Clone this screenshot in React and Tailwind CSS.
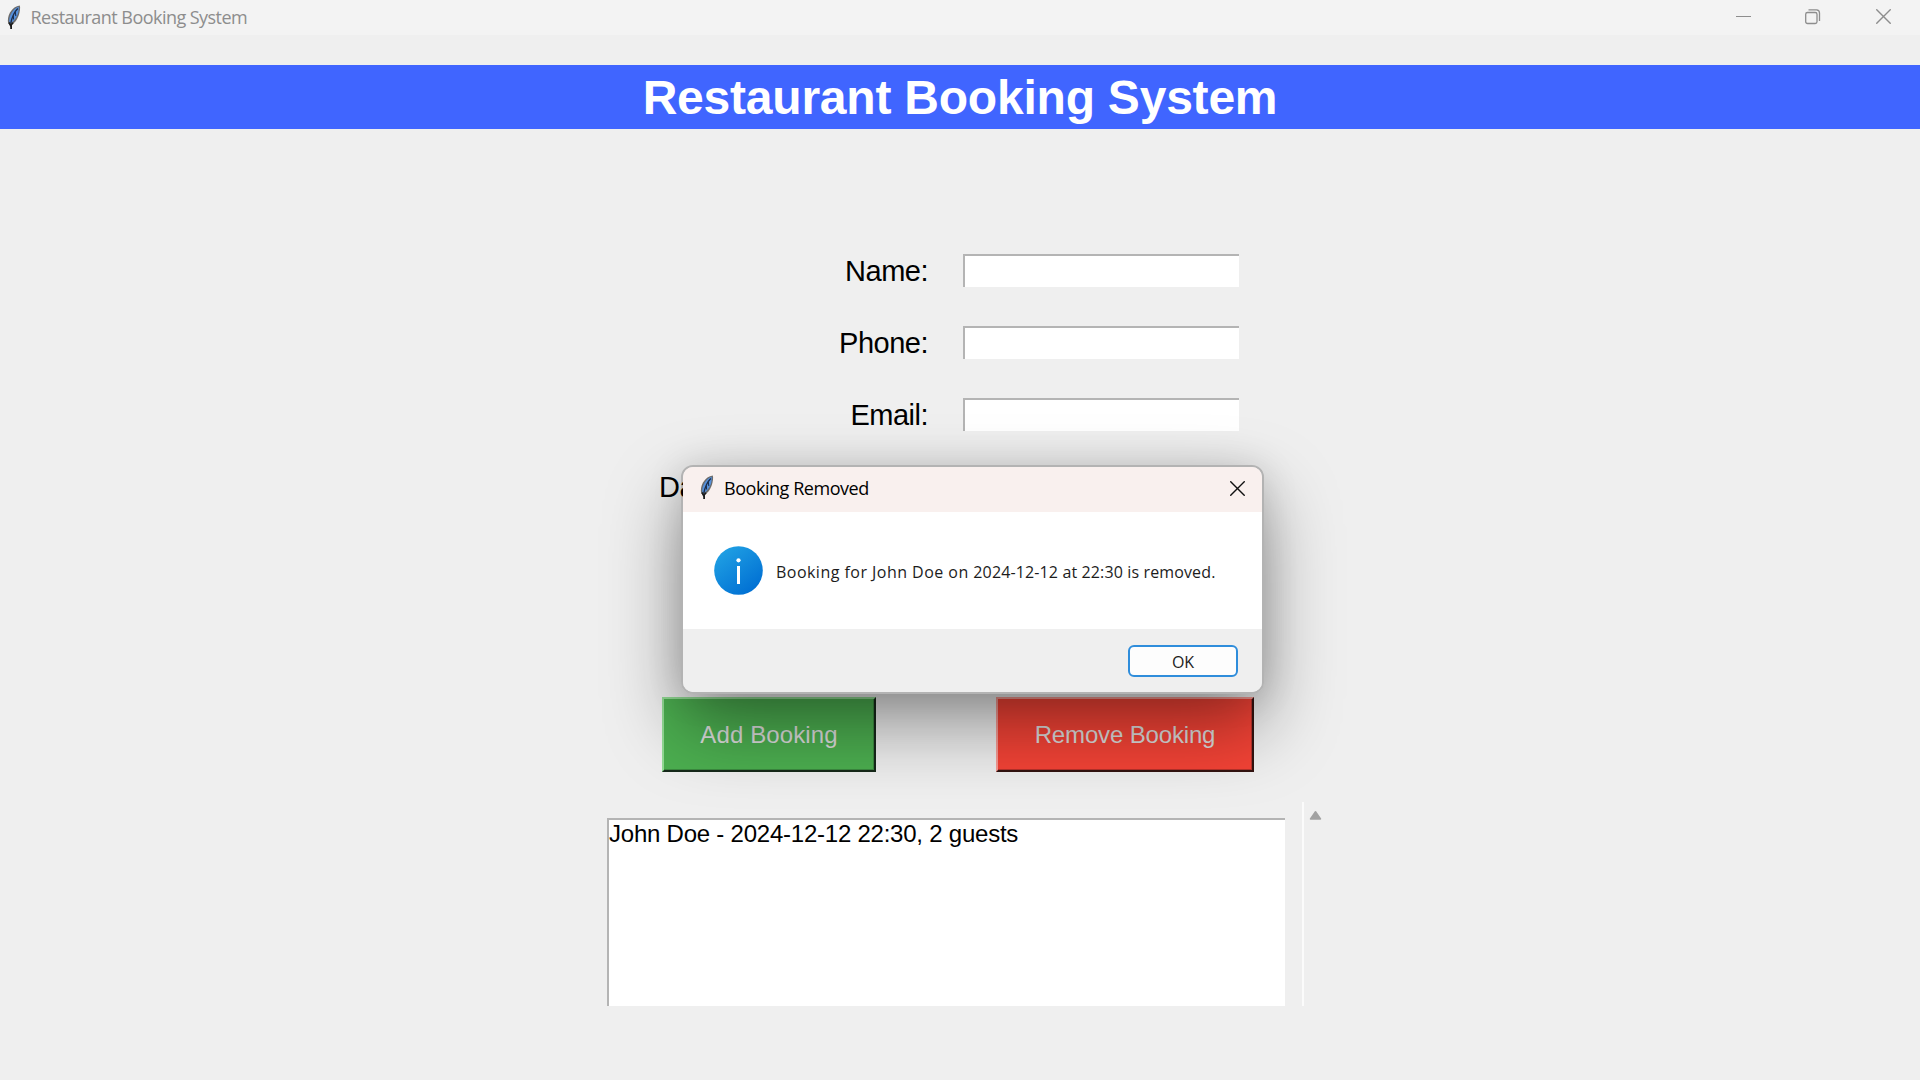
function Feather() {
  return (
    <svg className="shrink-0" width="14" height="25" viewBox="0 0 14 25" fill="none">
      <path d="M12.800.5C9 .8 5.500 3.500 3 7.500 1 11.300.4 15 1.200 18.200L3.400 20.500C7.300 18.700 10.500 14.500 12 9.500 12.900 6 13.500 3 12.800.5Z" fill="#6b6b6b" />
      <path d="M11.600 1.800C8 3 5 6.300 3.300 10.500 2.100 13.500 1.900 16.300 2.800 18.300 6.800 16.800 9.500 13 10.800 9 11.600 6.300 12 3.700 11.600 1.800Z" fill="#5590dc" />
      <path d="M10.800 3.500C7.200 7 5 12 3.700 18.500" stroke="#1b2c49" strokeWidth="1.300" />
      <path d="M8.300 7 8.800 11M6.300 10.500 6.600 14.500" stroke="#1b2c49" strokeWidth="1" />
      <path d="M2 17.500 3.600 20.500 6 17.800" stroke="#1c1c1c" strokeWidth="1.600" />
      <path d="M4.100 19V24" stroke="#1c1c1c" strokeWidth="1.800" />
    </svg>
  );
}

function Cross({ color }) {
  return (
    <svg className="shrink-0" width="15" height="15" viewBox="0 0 15 15" fill="none" stroke={color} strokeWidth="1.400">
      <path d="M.3.3l14.400 14.400M14.700.3L.3 14.700" />
    </svg>
  );
}

function InfoIcon() {
  return (
    <svg className="shrink-0" width="49" height="49" viewBox="0 0 49 49">
      <defs>
        <linearGradient id="info" x1="0.15" y1="0.1" x2="0.8" y2="0.95">
          <stop offset="0" stopColor="#1f9fe3" />
          <stop offset="1" stopColor="#006fd3" />
        </linearGradient>
      </defs>
      <circle cx="24.500" cy="24.500" r="24.300" fill="url(#info)" />
      <circle cx="24.500" cy="14.300" r="2.100" fill="#fff" />
      <rect x="23" y="20" width="3" height="18" fill="#fff" />
    </svg>
  );
}

const fields = ["Name:", "Phone:", "Email:"];
const bookings = ["John Doe - 2024-12-12 22:30, 2 guests"];

function Label({ children }) {
  return <label className="w-[928px] shrink-0 text-right text-[29px] leading-[34px] tracking-[-0.5px]">{children}</label>;
}

export default function App() {
  return (
    <div className="relative h-[1080px] w-[1920px] overflow-hidden bg-[#efefef] font-['Liberation_Sans',sans-serif] text-black">
      <header className="flex h-[35px] bg-[#f3f3f3] pl-[7px] font-['Open_Sans',sans-serif]">
        <div className="pt-[5px]">
          <Feather />
        </div>
        <span className="ml-[9.500px] text-[18px] leading-[34px] tracking-[-0.54px] text-[#8d8d8d]">Restaurant Booking System</span>
        <div className="ml-auto flex items-start pr-[29px] pt-[9px]">
          <div className="mt-[7px] h-px w-[15px] bg-[#8d8d8d]" />
          <svg className="ml-[54px]" width="16" height="16" viewBox="0 0 16 16" fill="none" stroke="#8d8d8d" strokeWidth="1.300">
            <rect x=".7" y="3.500" width="11.300" height="11" rx="1.800" />
            <path d="M3.500.8H11.500Q14.500.8 14.500 4V12" />
          </svg>
          <div className="ml-[55px]">
            <Cross color="#8d8d8d" />
          </div>
        </div>
      </header>

      <h1 className="mt-[30px] h-16 bg-[#4065ff] text-center text-[48px] font-bold leading-[66px] tracking-[-0.22px] text-white">
        Restaurant Booking System
      </h1>

      <main className="mt-[125px]">
        <div className="flex flex-col gap-[39px]">
          {fields.map((name) => (
            <div key={name} className="flex h-[33px] items-center">
              <Label>{name}</Label>
              <input className="ml-[35px] h-[33px] w-[276px] border-l-2 border-t-2 border-[#b4b4b4] bg-white outline-none" />
            </div>
          ))}
          <div className="flex h-[33px] items-center pl-[659px]">
            <span className="whitespace-nowrap text-[29px] leading-[34px] tracking-[-0.5px]">Date:</span>
          </div>
        </div>

        <div className="mt-[194px] flex gap-[120px] pl-[662px] text-[24px] leading-none text-[#ddd]">
          <button className="flex h-[75px] w-[214px] justify-center border-2 border-b-[#16291a] border-l-[#93dc95] border-r-[#16291a] border-t-[#93dc95] bg-[#4caf50] pt-px leading-[70px] tracking-[0.12px] shadow-[inset_-1px_-1px_0_#3b8a3f]">
            Add Booking
          </button>
          <button className="flex h-[75px] w-[258px] justify-center border-2 border-b-[#331310] border-l-[#f79a93] border-r-[#331310] border-t-[#f79a93] bg-[#f44336] pt-px leading-[70px] tracking-[-0.15px] shadow-[inset_-1px_-1px_0_#b8322a]">
            Remove Booking
          </button>
        </div>

        <div className="mt-[30px] flex h-[204px] pl-[607px]">
          <ul className="mt-4 h-[188px] w-[678px] border-l-2 border-t-2 border-[#b4b4b4] bg-white text-[24px] leading-[28px] tracking-[-0.23px]">
            {bookings.map((b) => (
              <li key={b}>{b}</li>
            ))}
          </ul>
          <div className="ml-[17px] flex w-[30px] border-l-2 border-[#fbfbfb] pl-[5px] pt-[8px]">
            <svg width="13" height="11" viewBox="0 0 13 11">
              <path d="M6.500 1.800 11.500 9H1.500Z" fill="#a2a2a2" stroke="#a2a2a2" strokeWidth="1.500" strokeLinejoin="round" />
            </svg>
          </div>
        </div>
      </main>

      {/* Confirmation dialog floating above the form */}
      <section
        role="dialog"
        className="absolute left-[681px] top-[465px] h-[229px] w-[583px] rounded-[12px] border-2 border-black/25 bg-clip-padding font-['Open_Sans',sans-serif] shadow-[0_32px_76px_rgba(0,0,0,0.4),0_2px_36px_rgba(0,0,0,0.12)]"
      >
        <div className="flex h-full flex-col overflow-hidden rounded-[10px]">
          <div className="flex h-[45px] shrink-0 bg-[#f9f0ee] pl-[17px] pr-[17px]">
            <div className="pt-[8px]">
              <Feather />
            </div>
            <span className="ml-[10px] text-[18px] leading-[43px] tracking-[-0.45px]">Booking Removed</span>
            <div className="ml-auto pt-[14px]">
              <Cross color="#111" />
            </div>
          </div>
          <div className="flex h-[117px] shrink-0 items-center bg-white pl-[31px]">
            <InfoIcon />
            <p className="ml-[13px] mt-[3px] whitespace-nowrap text-[16px] font-medium leading-[24px] tracking-[0.13px] text-[#1c1c1c]">
              <span className="tracking-[0.47px]">Booking for John Doe on </span>
              2024-12-12 at 22:30 is removed.
            </p>
          </div>
          <div className="flex grow justify-end bg-[#efefef] pr-[24px] pt-[16px]">
            <button className="h-[32px] w-[110px] rounded-[6px] border-2 border-[#2f8ddb] bg-[#fdfdfd] pt-px text-[16px] font-medium leading-[29px] text-[#1c1c1c]">OK</button>
          </div>
        </div>
      </section>
    </div>
  );
}
